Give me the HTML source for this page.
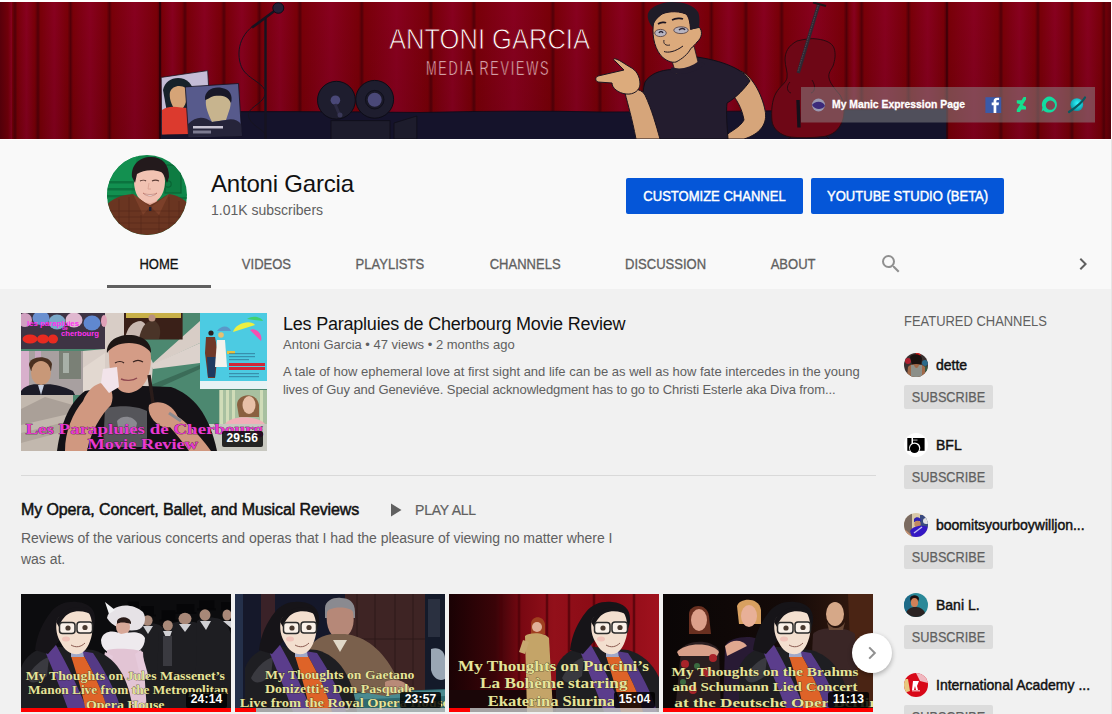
<!DOCTYPE html>
<html><head><meta charset="utf-8">
<style>
*{box-sizing:border-box;margin:0;padding:0}
html,body{width:1112px;height:714px;overflow:hidden;background:#f1f1f1;font-family:"Liberation Sans",sans-serif}
.a{position:absolute}
#hdr{position:absolute;left:0;top:0;width:1112px;height:289px;background:#f9f9f9}
#topw{position:absolute;left:0;top:0;width:1112px;height:2px;background:#fff}
#banner{position:absolute;left:0;top:2px;width:1111px;height:137px;overflow:hidden}
#bline{position:absolute;left:0;top:139px;width:1112px;height:1px;background:#fff}
.tab{position:absolute;top:256px;font-size:14px;color:#606060;-webkit-text-stroke:.3px #606060;text-align:center;white-space:nowrap;line-height:16px}
.sx{display:inline-block;transform:scaleX(.93)}
.btn{position:absolute;top:178px;height:36px;background:#0556d8;border-radius:2px;color:#fff;font-size:14px;-webkit-text-stroke:.45px #fff;line-height:36px;text-align:center;white-space:nowrap}
</style></head><body>
<div id="hdr"></div>
<div id="topw"></div>
<div id="banner">
<svg width="1111" height="137" viewBox="0 2 1111 137">
<defs>
<linearGradient id="cur" x1="0" y1="0" x2="1111" y2="0" gradientUnits="userSpaceOnUse"><stop offset="0.0000" stop-color="#5a000a"/><stop offset="0.0072" stop-color="#72000a"/><stop offset="0.0104" stop-color="#88011f"/><stop offset="0.0108" stop-color="#790008"/><stop offset="0.0135" stop-color="#520008"/><stop offset="0.0158" stop-color="#790008"/><stop offset="0.0239" stop-color="#88011f"/><stop offset="0.0315" stop-color="#790008"/><stop offset="0.0342" stop-color="#520008"/><stop offset="0.0365" stop-color="#790008"/><stop offset="0.0488" stop-color="#88011f"/><stop offset="0.0608" stop-color="#790008"/><stop offset="0.0635" stop-color="#520008"/><stop offset="0.0657" stop-color="#790008"/><stop offset="0.0810" stop-color="#88011f"/><stop offset="0.0959" stop-color="#790008"/><stop offset="0.0986" stop-color="#520008"/><stop offset="0.1008" stop-color="#790008"/><stop offset="0.1213" stop-color="#88011f"/><stop offset="0.1413" stop-color="#790008"/><stop offset="0.1440" stop-color="#520008"/><stop offset="0.1463" stop-color="#790008"/><stop offset="0.1553" stop-color="#88011f"/><stop offset="0.1638" stop-color="#790008"/><stop offset="0.1665" stop-color="#520008"/><stop offset="0.1688" stop-color="#790008"/><stop offset="0.1841" stop-color="#88011f"/><stop offset="0.1989" stop-color="#790008"/><stop offset="0.2016" stop-color="#520008"/><stop offset="0.2039" stop-color="#790008"/><stop offset="0.2176" stop-color="#88011f"/><stop offset="0.2308" stop-color="#790008"/><stop offset="0.2335" stop-color="#520008"/><stop offset="0.2357" stop-color="#790008"/><stop offset="0.2518" stop-color="#88011f"/><stop offset="0.2673" stop-color="#790008"/><stop offset="0.2700" stop-color="#520008"/><stop offset="0.2723" stop-color="#790008"/><stop offset="0.2978" stop-color="#88011f"/><stop offset="0.3230" stop-color="#790008"/><stop offset="0.3257" stop-color="#520008"/><stop offset="0.3279" stop-color="#790008"/><stop offset="0.3568" stop-color="#88011f"/><stop offset="0.3852" stop-color="#790008"/><stop offset="0.3879" stop-color="#520008"/><stop offset="0.3902" stop-color="#790008"/><stop offset="0.4073" stop-color="#88011f"/><stop offset="0.4239" stop-color="#790008"/><stop offset="0.4266" stop-color="#520008"/><stop offset="0.4289" stop-color="#790008"/><stop offset="0.4622" stop-color="#88011f"/><stop offset="0.4950" stop-color="#790008"/><stop offset="0.4977" stop-color="#520008"/><stop offset="0.5000" stop-color="#790008"/><stop offset="0.5189" stop-color="#88011f"/><stop offset="0.5374" stop-color="#790008"/><stop offset="0.5401" stop-color="#520008"/><stop offset="0.5423" stop-color="#790008"/><stop offset="0.5595" stop-color="#88011f"/><stop offset="0.5763" stop-color="#790008"/><stop offset="0.5790" stop-color="#520008"/><stop offset="0.5813" stop-color="#790008"/><stop offset="0.6097" stop-color="#88011f"/><stop offset="0.6377" stop-color="#790008"/><stop offset="0.6404" stop-color="#520008"/><stop offset="0.6427" stop-color="#790008"/><stop offset="0.6559" stop-color="#88011f"/><stop offset="0.6688" stop-color="#790008"/><stop offset="0.6715" stop-color="#520008"/><stop offset="0.6737" stop-color="#790008"/><stop offset="0.6876" stop-color="#88011f"/><stop offset="0.7010" stop-color="#790008"/><stop offset="0.7037" stop-color="#520008"/><stop offset="0.7059" stop-color="#790008"/><stop offset="0.7328" stop-color="#88011f"/><stop offset="0.7592" stop-color="#790008"/><stop offset="0.7619" stop-color="#520008"/><stop offset="0.7642" stop-color="#790008"/><stop offset="0.7688" stop-color="#88011f"/><stop offset="0.7729" stop-color="#790008"/><stop offset="0.7756" stop-color="#520008"/><stop offset="0.7779" stop-color="#790008"/><stop offset="0.7967" stop-color="#88011f"/><stop offset="0.8151" stop-color="#790008"/><stop offset="0.8178" stop-color="#520008"/><stop offset="0.8201" stop-color="#790008"/><stop offset="0.8350" stop-color="#88011f"/><stop offset="0.8494" stop-color="#790008"/><stop offset="0.8521" stop-color="#520008"/><stop offset="0.8544" stop-color="#790008"/><stop offset="0.8766" stop-color="#88011f"/><stop offset="0.8983" stop-color="#790008"/><stop offset="0.9010" stop-color="#520008"/><stop offset="0.9032" stop-color="#790008"/><stop offset="0.9176" stop-color="#88011f"/><stop offset="0.9316" stop-color="#790008"/><stop offset="0.9343" stop-color="#520008"/><stop offset="0.9365" stop-color="#790008"/><stop offset="0.9496" stop-color="#88011f"/><stop offset="0.9622" stop-color="#790008"/><stop offset="0.9649" stop-color="#520008"/><stop offset="0.9671" stop-color="#790008"/><stop offset="0.9793" stop-color="#88011f"/><stop offset="0.9910" stop-color="#790008"/><stop offset="0.9937" stop-color="#520008"/><stop offset="0.9959" stop-color="#790008"/><stop offset="0.9955" stop-color="#6e0008"/><stop offset="1.0000" stop-color="#58000a"/></linearGradient>
<linearGradient id="vsh" x1="0" y1="0" x2="0" y2="1"><stop offset="0" stop-color="#000" stop-opacity="0"/><stop offset="1" stop-color="#000" stop-opacity=".1"/></linearGradient>
</defs>
<rect x="0" y="0" width="1111" height="140" fill="url(#cur)"/>
<rect x="0" y="0" width="1111" height="140" fill="url(#vsh)"/>
<!-- floor -->
<path d="M160 112 Q300 111 420 112.5 Q520 110 600 112 Q700 111.5 760 111 Q870 109.5 947 109 L947 140 L160 140 Z" fill="#15132b" stroke="#0c0a18" stroke-width=".8"/>
<!-- curtain edges in front -->
<path d="M947 2 L947 140" stroke="#3a0008" stroke-width="1.2"/>
<path d="M160 2 L160 140" stroke="#2a0008" stroke-width="1.5"/>

<!-- title text -->
<text x="389" y="48.5" font-family="Liberation Sans" font-size="29.6" fill="#fff" stroke="#82000f" stroke-width=".9" textLength="201" lengthAdjust="spacingAndGlyphs">ANTONI GARCIA</text>
<text x="687" y="75.5" font-family="Liberation Sans" font-size="20.6" fill="#f0d4da" stroke="#82000f" stroke-width=".7" textLength="197.6" lengthAdjust="spacing" transform="scale(.62 1)">MEDIA REVIEWS</text>

<!-- mic stand -->
<path d="M253 26 C235 40 238 60 242 68 C248 80 268 84 265 95 C262 105 245 108 249 118 C253 128 268 130 266 139" stroke="#161320" stroke-width="1" fill="none"/>
<path d="M265.5 17 L265.5 139" stroke="#161320" stroke-width="2.4"/>
<path d="M252 27.5 L275 10.5" stroke="#161320" stroke-width="2.6"/>
<ellipse cx="278.3" cy="8" rx="5.5" ry="5.3" fill="#232138" stroke="#0e0c18" stroke-width="1"/>

<!-- CDs -->
<polygon points="161.2,77.4 207.7,70.6 211,130 161.8,134.5" fill="#c4bcd6" stroke="#1a1420" stroke-width=".8"/>
<path d="M163 90 C165 80 175 76 184 79 C192 82 196 92 193 102 L188 112 L168 118 Z" fill="#17222a"/>
<path d="M170 92 C172 86 180 84 186 88 C189 96 186 104 183 108 L175 110 C171 104 169 98 170 92Z" fill="#d6a477"/>
<path d="M162 110 C170 104 180 108 188 108 L190 134 L162 134.5Z" fill="#dc3a2e"/>
<polygon points="185.3,86.9 238.5,83.5 241.8,136.1 188.6,137.3" fill="#575a8c" stroke="#14121f" stroke-width=".8"/>
<path d="M206 100 C206 92 214 88 222 90 C230 92 232 100 230 108 L226 120 L212 122 C208 114 205 106 206 100Z" fill="#c7b48e"/>
<path d="M205 100 C204 90 214 86 222 88 C230 89 233 96 231 103 C228 96 222 95 214 96 C210 97 207 100 205 100Z" fill="#181828"/>
<path d="M188 124 C196 116 204 116 212 122 L226 120 C232 118 238 120 241 124 L241.6 136 L188.5 137Z" fill="#26243a"/>
<rect x="193" y="126" width="30" height="2.5" fill="#e6e0ee" opacity=".85"/>
<rect x="193" y="130.5" width="18" height="3" fill="#b8b6cc" opacity=".6"/>

<!-- projector -->
<circle cx="336.4" cy="100.2" r="18.9" fill="#1e1d2e" stroke="#0d0c16" stroke-width="1"/>
<circle cx="374.7" cy="99.3" r="18.9" fill="#1e1d2e" stroke="#0d0c16" stroke-width="1"/>
<circle cx="335.4" cy="100.2" r="4.8" fill="#4a4878"/>
<path d="M335 104 L340 116" stroke="#2c2a42" stroke-width="3"/>
<circle cx="340" cy="115" r="2.5" fill="#3a3858"/>
<circle cx="374.7" cy="99.7" r="9.3" fill="#1a1928" stroke="#0d0c16" stroke-width=".8"/>
<circle cx="374.7" cy="99.7" r="7" fill="#4a4878"/>
<rect x="331" y="120.7" width="59" height="19" fill="#1d1c2c" stroke="#0f0e18" stroke-width=".8"/>
<polygon points="394,123 416.8,116 416.8,139 394,139" fill="#1d1c2c" stroke="#0f0e18" stroke-width=".8"/>

<!-- cello -->
<path d="M797 41 C805 39 812 38 817 39 C826 40 832 43 834 48 C836 54 835 60 833 66 C831 70 828 73 829 78 C830 83 834 88 840 95 C845 103 845 115 842 122 C838 131 832 135 824 136.5 C812 138 800 138 790 137 C780 135 773 129 772 121 C771 111 772 100 776 93 C780 86 786 83 787 78 C788 72 785 66 785 60 C785 52 788 46 797 41Z" fill="#6e0716" stroke="#2a0a10" stroke-width="1"/>
<path d="M818.8 4 L798.2 73" stroke="#2e2832" stroke-width="3.4"/>
<path d="M818.3 5 L797.7 72" stroke="#6a5a66" stroke-width=".6" stroke-dasharray="1.5 1"/>
<path d="M813 2.5 L826 6" stroke="#1e1418" stroke-width="2.2"/>
<path d="M798 100 L799 127.5" stroke="#14101a" stroke-width="3.4"/>
<path d="M790 82 C786 86 787 92 791 93 M812 80 C816 86 815 92 811 93" stroke="#1e0a10" stroke-width=".8" fill="none"/>
<path d="M791 137 L787 140 M826 136 L830 140" stroke="#1e0a10" stroke-width="1"/>
<!-- character -->
<!-- right arm -->
<path d="M738 70 C752 74 762 95 765 110 C768 124 760 134 744 139 L722 139 C728 132 740 128 744 120 C742 108 736 98 730 92Z" fill="#d6a57a" stroke="#1b1420" stroke-width="1"/>
<!-- shirt -->
<path d="M672 69.5 C660 70 650 74 645 82 C641 95 642 118 643 139 L728 139 C727 125 726 112 727 103 C736 98 745 88 750 81 C745 72 730 62 697 57 Z" fill="#231c2e" stroke="#120e18" stroke-width="1"/>
<!-- neck -->
<path d="M671 58 L676 74 L699 66 L694 46Z" fill="#d6a57a" stroke="#1b1420" stroke-width=".8"/>
<path d="M671.5 67.3 C680 70 690 68 699 61 L705 64 C694 74 680 76 670 72Z" fill="#231c2e"/>
<!-- head -->
<path d="M653.7 22 C652 32 653 46 661 55.7 C666 61 672 63 676 62 C682 59 688 54 690.5 49 C693 46 696 44 697 42 C702 38 703 31 699 27 L690.5 29.4 C690 22 689 17 686 14 C676 10 665 12 661 14.7 C657 18 655 20 653.7 22Z" fill="#dcaa7c" stroke="#1b1420" stroke-width="1"/>
<path d="M647.9 13.7 C650 7 660 2.5 671.5 2 C684 2 694 5 698.3 12.6 C700 18 699.5 24 698.9 28 L690.5 29.4 C690 22 689 17 686 14 C676 10 665 12 661 14.7 C657 18 655 21 653.7 24.2 L652.6 27.3 C649 23 647 18 647.9 13.7Z" fill="#1f1c28"/>
<path d="M658 24 C661 22 665 22 666 23 M672 20 C676 18 681 18 683 19" stroke="#1b1420" stroke-width="1.6" fill="none"/>
<ellipse cx="660.5" cy="33" rx="5.8" ry="3.6" fill="#b8b4c0" stroke="#4a3a40" stroke-width=".8"/>
<ellipse cx="681" cy="30.2" rx="7.2" ry="3.4" fill="#b8b4c0" stroke="#4a3a40" stroke-width=".8"/>
<path d="M659 33 C660 31 662 31 663 33 M679 30 C681 28 684 28 685 30" stroke="#2a2436" stroke-width="1.5" fill="none"/>
<path d="M664 40 C663 44 666 46 670 45" stroke="#1b1420" stroke-width=".9" fill="none"/>
<path d="M664 51.5 C668 53 675 52 683 46" stroke="#1b1420" stroke-width="1" fill="none"/>
<!-- left arm -->
<path d="M625 93 C628 105 632 118 636 139 L660 139 C656 125 652 110 645 95 C642 90 636 88 630 90Z" fill="#d6a57a" stroke="#1b1420" stroke-width="1"/>
<path d="M615 61 C618 64 621 67 624 70 L598 76 C595 77 595 81 598 82 L612 83 C612 88 618 93 626 94 C634 95 640 90 640 84 C640 76 636 70 630 67 C626 65 620 60 616 59 C613 58 613 60 615 61Z" fill="#dcab7c" stroke="#1b1420" stroke-width="1"/>

<!-- overlay box -->
<rect x="801" y="87" width="294" height="35.5" fill="#8c8c8c" fill-opacity=".5"/>
<circle cx="818.5" cy="105" r="6.5" fill="#9a98b0"/>
<path d="M812 105 C814 101 823 100 825 106 C822 110 815 110 812 105Z" fill="#3c2a7a"/>
<text x="832" y="108.3" font-family="Liberation Sans" font-size="11.8" font-weight="bold" fill="#fff" stroke="#fff" stroke-width=".3" textLength="133" lengthAdjust="spacingAndGlyphs">My Manic Expression Page</text>
<rect x="985.4" y="97.2" width="15.8" height="15.8" fill="#3b5aa8"/>
<path d="M996.3 113 L996.3 105.2 L998.6 105.2 L999 102.6 L996.3 102.6 L996.3 101.2 C996.3 100.4 996.7 100 997.6 100 L999.1 100 L999.1 97.7 L997.1 97.7 C994.8 97.7 993.6 99 993.6 101 L993.6 102.6 L991.7 102.6 L991.7 105.2 L993.6 105.2 L993.6 113Z" fill="#fff"/>
<path d="M1016.8 100.3 L1021.6 100.3 L1023.6 97 L1026 97 L1026 99.5 L1022.6 105 L1026 106.8 L1026 109.4 L1021.4 109.4 L1019.8 112 L1016.8 112 L1016.8 109.6 L1020.2 104.2 L1016.8 103.2Z" fill="#14e08e"/>
<path fill-rule="evenodd" d="M1049.2 96.6 A8 8 0 1 1 1043.2 110.2 L1041.6 112 L1042.4 107.4 A8 8 0 0 1 1049.2 96.6Z M1050.4 100.6 A4.6 4.6 0 1 0 1050.41 100.6Z" fill="#12dca0"/>
<defs><radialGradient id="pl" cx=".55" cy=".4" r=".6"><stop offset="0" stop-color="#30f8ff"/><stop offset="1" stop-color="#0a9aa8"/></radialGradient></defs>
<circle cx="1076.8" cy="104.6" r="6.4" fill="url(#pl)"/>
<path d="M1069 112 C1072 110 1082 103 1085 97.5" stroke="#0a5a60" stroke-width="2.2" fill="none" stroke-linecap="round"/>
</svg>

</div>
<div id="bline"></div>

<!-- avatar -->
<div class="a" style="left:107px;top:155px;width:80px;height:80px;border-radius:50%;overflow:hidden"><svg width="80" height="80" viewBox="0 0 80 80">
<rect width="80" height="80" fill="#10864a"/>
<path d="M0 0 L30 0 L24 40 L0 44Z" fill="#139050"/>
<g fill="#0b6c3a" opacity=".8"><rect x="0" y="26" width="28" height="2.5"/><rect x="0" y="33" width="28" height="2.5"/><rect x="0" y="40" width="28" height="2.5"/><rect x="62" y="42" width="18" height="2"/></g>
<rect x="58" y="10" width="16" height="28" fill="#0e7c42" stroke="#0a6434" stroke-width="1.2"/>
<circle cx="61" cy="29" r="3.2" fill="none" stroke="#0a6434" stroke-width="1.2"/>
<path d="M36 44 L50 44 L52 52 L34 52Z" fill="#e2a898"/>
<path d="M27 26 C26 16 33 10 42 10 C52 10 58 16 58 26 C58 38 52 48 42 48 C32 48 27 38 27 26Z" fill="#f1c2b2"/>
<path d="M25 22 C24 10 32 2 44 2 C56 2 62 10 62 22 L60 28 C58 22 56 18 54 17 C46 14 36 15 30 19 L28 28 Z" fill="#231a1c"/>
<path d="M33 26 C35 25 38 25 39 26 M45 26 C47 25 50 25 52 26" stroke="#5a3a34" stroke-width="1.1" fill="none"/>
<path d="M42 28 L41 34 L44 34" stroke="#d8a090" stroke-width=".8" fill="none"/>
<path d="M36 38 C40 42 46 42 50 38 C48 40 38 40 36 38Z" fill="#fff" stroke="#b06a60" stroke-width=".6"/>
<path d="M0 50 C4 44 14 40 26 39 C30 42 36 47 43 50 C50 47 56 42 62 39 C70 40 77 44 80 48 L80 80 L0 80Z" fill="#6b3522"/>
<path d="M26 39 L36 60 L43 52 L33 44Z" fill="#7c412a"/><path d="M62 39 L52 60 L44 52 L55 44Z" fill="#7c412a"/>
<rect x="42" y="52" width="2.4" height="4" fill="#1e2236"/>
<g stroke="#3a1a10" stroke-width=".55" opacity=".55"><path d="M0 56 H80"/><path d="M0 62 H80"/><path d="M0 68 H80"/><path d="M0 74 H80"/><path d="M12 44 V80"/><path d="M22 42 V80"/><path d="M62 42 V80"/><path d="M72 46 V80"/><path d="M34 60 V80"/><path d="M52 60 V80"/></g>
</svg></div>
<div class="a" style="left:211px;top:170px;font-size:24px;letter-spacing:-.2px;color:#111;white-space:nowrap;line-height:28px">Antoni Garcia</div>
<div class="a" style="left:211px;top:202px;font-size:14px;color:#606060;white-space:nowrap;line-height:16px">1.01K subscribers</div>
<div class="btn" style="left:626px;width:177px"><span class="sx">CUSTOMIZE CHANNEL</span></div>
<div class="btn" style="left:811px;width:193px"><span class="sx">YOUTUBE STUDIO (BETA)</span></div>

<div class="tab" style="left:107px;width:104px;color:#111;-webkit-text-stroke-color:#111"><span class="sx">HOME</span></div>
<div class="tab" style="left:211px;width:111.5px"><span class="sx">VIDEOS</span></div>
<div class="tab" style="left:322.5px;width:133.7px"><span class="sx">PLAYLISTS</span></div>
<div class="tab" style="left:457px;width:136px"><span class="sx">CHANNELS</span></div>
<div class="tab" style="left:593.8px;width:144.3px"><span class="sx">DISCUSSION</span></div>
<div class="tab" style="left:738.2px;width:109px"><span class="sx">ABOUT</span></div>
<div class="a" style="left:107px;top:285px;width:104px;height:3px;background:#606060"></div>


<!-- search & chevron -->
<svg class="a" style="left:879px;top:252px" width="24" height="24" viewBox="0 0 24 24"><path d="M15.5 14h-.79l-.28-.27A6.47 6.47 0 0 0 16 9.5 6.5 6.5 0 1 0 9.5 16c1.61 0 3.09-.59 4.23-1.57l.27.28v.79l5 4.99L20.49 19l-4.99-5zm-6 0C7.01 14 5 11.99 5 9.5S7.01 5 9.5 5 14 7.01 14 9.5 11.99 14 9.5 14z" fill="#909090"/></svg>
<svg class="a" style="left:1071px;top:252px" width="24" height="24" viewBox="0 0 24 24"><path d="M8.59 16.59L13.17 12 8.59 7.41 10 6l6 6-6 6-1.41-1.41z" fill="#606060"/></svg>

<!-- featured video -->
<div class="a" style="left:283px;top:313px;font-size:18px;letter-spacing:-.22px;color:#111;white-space:nowrap;line-height:22px">Les Parapluies de Cherbourg Movie Review</div>
<div class="a" style="left:283px;top:337px;font-size:13px;color:#606060;white-space:nowrap;line-height:16px">Antoni Garcia &bull; 47 views &bull; 2 months ago</div>
<div class="a" style="left:283px;top:363px;width:600px;font-size:13px;color:#606060;line-height:18px;white-space:nowrap">A tale of how ephemeral love at first sight and life can be as well as how fate intercedes in the young<br><span style="letter-spacing:-.085px">lives of Guy and Geneviéve. Special acknowledgment has to go to Christi Esterle aka Diva from...</span></div>

<div class="a" style="left:21px;top:475px;width:855px;height:1px;background:#d9d9d9"></div>

<div class="a" style="left:21px;top:500px;font-size:16px;color:#111;-webkit-text-stroke:.5px #111;letter-spacing:-.11px;white-space:nowrap;line-height:19px">My Opera, Concert, Ballet, and Musical Reviews</div>
<svg class="a" style="left:384px;top:498px" width="24" height="24" viewBox="0 0 24 24"><path d="M7 5.5v13l10.5-6.5z" fill="#606060"/></svg>
<div class="a" style="left:415px;top:502px;font-size:14px;color:#606060;-webkit-text-stroke:.2px #606060;letter-spacing:-.2px;white-space:nowrap;line-height:16px">PLAY ALL</div>
<div class="a" style="left:21px;top:528px;font-size:14px;color:#606060;line-height:21px;letter-spacing:-.025px;white-space:nowrap">Reviews of the various concerts and operas that I had the pleasure of viewing no matter where I<br>was at.</div>

<!--THUMBS--><svg width="0" height="0" style="position:absolute"><defs>
<g id="rev">
<path d="M0 74 C4 62 16 54 28 52 L72 56 C94 62 108 82 112 118 L0 118Z" fill="#1e1e22"/>
<path d="M6 84 C12 72 20 66 28 63 L26 82 C18 88 10 92 6 84Z" fill="#3a3a40"/>
<path d="M22 52 L35 51 C46 70 58 95 67 118 L48 118 C40 95 30 72 22 52Z" fill="#5b3d8c"/>
<path d="M60 57 L72 59 C86 80 96 100 101 118 L87 118 C81 95 71 75 60 57Z" fill="#553a86"/>
<path d="M50 62 L63 62 C73 80 83 100 87 118 L65 118 C61 96 55 78 50 62Z" fill="#de6328"/>
<path d="M50 58 L62 58 L63 63 L50 63Z" fill="#a0a8c8"/>
<path d="M14 56 C16 40 22 28 30 18 C36 10 46 7 56 8 C68 9 74 15 74 25 C74 31 72 35 71 37 L42 42 C38 48 32 54 27 60Z" fill="#161418"/>
<path d="M36 26 C40 18 52 14 66 16 C71 22 72 32 71 40 C69 50 65 58 58 60 C50 61 44 57 40 49 C36 43 34 34 36 26Z" fill="#f3dfcf"/>
<path d="M35 28 C38 18 50 12 62 13 C68 14 72 18 73 22 C66 17 56 16 49 19 C43 22 40 27 38 33Z" fill="#161418"/>
<ellipse cx="45" cy="45" rx="4" ry="2.5" fill="#f0b8b0" opacity=".7"/>
<rect x="38.5" y="28.5" width="15.5" height="11" rx="3" fill="#fff" fill-opacity=".55" stroke="#2a2a2a" stroke-width="1.5"/>
<rect x="56" y="28" width="15.5" height="11" rx="3" fill="#fff" fill-opacity=".55" stroke="#2a2a2a" stroke-width="1.5"/>
<circle cx="47" cy="34" r="2.6" fill="#4a3a30"/><circle cx="64" cy="33.5" r="2.6" fill="#4a3a30"/>
<path d="M50 51 C55 54 60 53 64 49" stroke="#8a5a50" stroke-width="1" fill="none"/>
</g>
</defs></svg>
<div class="a" style="left:21px;top:313px;width:246px;height:138px;overflow:hidden"><svg width="246" height="138" viewBox="0 0 246 138">
<rect width="246" height="138" fill="#4c8870"/>
<path d="M84 0 L120 0 L120 26 L132 50 L179 8 L179 30 L132 52 L130 76 L90 80 L62 82 L62 38 L84 36Z" fill="#d8cdc6"/>
<path d="M130 52 L179 30 L179 50 L132 56Z" fill="#dcd2cc"/>
<path d="M62 55 L84 40 L84 82 L62 82Z" fill="#e2d8d0"/>
<path d="M120 76 L179 52 L179 56 L126 80Z" fill="#2a5040" opacity=".5"/>
<rect x="0" y="0" width="84" height="36" fill="#3e3444"/>
<g><ellipse cx="4" cy="7" rx="7" ry="7" fill="#d0a0c0"/><ellipse cx="20" cy="5" rx="8.5" ry="7" fill="#6a90d0"/><ellipse cx="36" cy="9" rx="8.5" ry="7.5" fill="#7aa8c8"/><ellipse cx="53" cy="7" rx="8.5" ry="7.5" fill="#e0b8d0"/><ellipse cx="71" cy="10" rx="8.5" ry="7.5" fill="#6088d0"/><ellipse cx="83" cy="8" rx="3" ry="6" fill="#e0a0b8"/></g>
<text x="6" y="13" font-family="Liberation Sans" font-weight="bold" font-size="6.5" fill="#ff30f0" textLength="52" lengthAdjust="spacingAndGlyphs">les parapluies</text>
<text x="41" y="17" font-family="Liberation Sans" font-weight="bold" font-size="5" fill="#ff30f0">de</text>
<text x="40" y="23" font-family="Liberation Sans" font-weight="bold" font-size="7" fill="#ff30f0" textLength="38" lengthAdjust="spacingAndGlyphs">cherbourg</text>
<g fill="#e82a20"><ellipse cx="9" cy="26" rx="7.5" ry="4.5"/><ellipse cx="22" cy="26" rx="6" ry="4.5"/><ellipse cx="32" cy="26" rx="5" ry="4.5"/></g>
<rect x="103" y="0" width="58.6" height="26.5" fill="#3a2018"/>
<rect x="105" y="0" width="55" height="5" fill="#c8b048"/>
<path d="M104 26 C106 14 112 8 120 8 C126 10 128 18 124 26Z" fill="#c8b8b0"/>
<path d="M118 26 C120 14 126 6 134 8 C140 12 140 20 138 26Z" fill="#4a3428"/>
<circle cx="131" cy="5" r="3.5" fill="#b89080"/>
<rect x="0" y="38" width="62" height="44" fill="#a8a0a0"/>
<rect x="0" y="38" width="8" height="44" fill="#d8b0cc"/>
<rect x="14" y="38" width="6" height="20" fill="#c8a8c0"/>
<rect x="38" y="38" width="22" height="28" fill="#7a8076"/>
<rect x="42" y="40" width="6" height="20" fill="#a8b0a8"/>
<path d="M8 52 C8 43 28 41 31 51 L30 58 L10 58Z" fill="#4a3020"/>
<ellipse cx="20" cy="60" rx="10" ry="12" fill="#c89878"/>
<path d="M0 78 C4 72 14 70 20 72 C28 70 40 72 52 78 L54 82 L0 82Z" fill="#1c1c28"/>
<path d="M17 72 L23 72 L20 82Z" fill="#c8d0e0"/>
<rect x="0" y="82" width="52" height="56" fill="#c2b8ae"/>
<path d="M0 96 L24 84 L52 92 L52 100 L0 112Z" fill="#aaa098"/>
<path d="M0 120 L40 110 L52 116 L0 130Z" fill="#b0a69c"/>
<rect x="179" y="0" width="67" height="76" fill="#4ccbe2"/>
<path d="M212 19 C214 10 230 6 234 12Z" fill="#eef040"/>
<path d="M229 17 C236 14 242 22 240 28Z" fill="#f850b0"/>
<path d="M226 6 C232 2 240 4 242 8Z" fill="#40d070"/>
<path d="M196 18 C200 12 208 12 210 18Z" fill="#5a98c8"/>
<circle cx="190" cy="20" r="2.6" fill="#2a2020"/>
<path d="M185 24 L194 24 L197 40 L194 65 L187 65 L184 40Z" fill="#703828"/>
<path d="M186 44 L195 44 L194 64 L187 64Z" fill="#1e3a60"/>
<circle cx="200" cy="22" r="2.8" fill="#e8c070"/>
<path d="M196 27 L204 27 L206 54 L194 54Z" fill="#f4f2ec"/>
<rect x="206" y="38" width="8" height="3" fill="#e8c040"/>
<g fill="#d02838"><rect x="208" y="50" width="36" height="3"/><rect x="208" y="54" width="36" height="3"/></g>
<g fill="#2a6a8a" opacity=".6"><rect x="208" y="40" width="26" height="1.2"/><rect x="208" y="43" width="26" height="1.2"/><rect x="208" y="46" width="20" height="1.2"/><rect x="208" y="60" width="30" height="1.2"/><rect x="208" y="63" width="30" height="1.2"/></g>
<rect x="179" y="68" width="67" height="8" fill="#e8f2f4"/>
<rect x="188" y="76" width="58" height="62" fill="#4c8870"/>
<rect x="198" y="77" width="48" height="34" fill="#a8c0a0"/>
<g fill="#d0dcb8"><rect x="199" y="77" width="3" height="34"/><rect x="205" y="77" width="3" height="34"/><rect x="211" y="77" width="3" height="34"/><rect x="239" y="77" width="3" height="34"/></g>
<path d="M216 92 C216 80 236 78 238 92 L238 104 L218 104Z" fill="#8a6040"/>
<ellipse cx="228" cy="92" rx="6.5" ry="9" fill="#e8c0a8"/>
<path d="M204 111 C210 102 236 102 244 111Z" fill="#f0b0b8"/>
<rect x="188" y="111" width="58" height="27" fill="#c8c8c0"/>
<path d="M36 138 C40 108 50 88 64 78 L96 72 L150 74 C172 82 188 100 196 138Z" fill="#141216"/>
<path d="M84 96 C92 92 116 92 126 98 L126 134 L82 134Z" fill="#55555a"/>
<path d="M96 108 C100 102 112 102 116 110 L114 120 L98 120Z" fill="#8a8a90"/>
<path d="M88 42 C86 30 96 24 108 24 C122 24 130 32 130 44 C130 62 124 78 108 80 C94 80 88 64 88 42Z" fill="#d49c86"/>
<path d="M86 40 C85 30 94 22 108 22 C122 22 131 30 130 40 C126 34 118 30 108 30 C98 30 90 34 86 40Z" fill="#1e1614"/>
<path d="M94 50 C97 48 101 48 103 50 M112 49 C115 47 119 47 122 49" stroke="#3a2420" stroke-width="1.2" fill="none"/>
<path d="M100 66 C104 68 112 68 116 65" stroke="#904850" stroke-width="1.4" fill="none"/>
<path d="M44 138 C44 118 52 100 62 88 C66 78 74 70 82 70 C90 72 94 82 90 92 C80 102 70 118 66 138Z" fill="#d09880"/>
<path d="M82 56 L96 54 L98 74 L88 80 L80 70Z" fill="#f2e4ea"/>
<path d="M128 62 L134 104" stroke="#2a1c1a" stroke-width="3.4"/>
<path d="M128 92 C136 86 150 90 156 102 C160 110 152 116 142 114 C132 110 126 100 128 92Z" fill="#d09880"/>
<path d="M150 100 C160 104 176 118 190 138 L168 138 C160 126 150 116 146 110Z" fill="#d09880"/>
<path d="M148 100 L160 108" stroke="#8a8a90" stroke-width="3"/>
<text x="4.4" y="120.8" font-family="Liberation Serif" font-weight="bold" font-size="14.5" fill="#e83ad0" stroke="#2a0a28" stroke-width=".5" paint-order="stroke" textLength="237.6" lengthAdjust="spacingAndGlyphs">Les Parapluies de Cherbourg</text>
<text x="66.4" y="135.5" font-family="Liberation Serif" font-weight="bold" font-size="14.5" fill="#e83ad0" stroke="#2a0a28" stroke-width=".5" paint-order="stroke" textLength="110.6" lengthAdjust="spacingAndGlyphs">Movie Review</text>
</svg></div>
<div class="a" style="left:222px;top:431px;width:40.5px;height:15.6px;background:rgba(0,0,0,.82);border-radius:2px;color:#fff;font-size:12px;font-weight:bold;line-height:15.6px;text-align:center;letter-spacing:.2px">29:56</div>
<div class="a" style="left:21px;top:594px;width:210px;height:118px;overflow:hidden"><svg width="210" height="118" viewBox="0 0 210 118">
<rect width="210" height="118" fill="#0c0c0e"/>
<g fill="#1e1e22">
<path d="M104 26 C108 22 122 22 126 28 L128 118 L100 118Z"/>
<path d="M118 32 C124 28 138 28 142 34 L144 118 L114 118Z"/>
<path d="M138 38 C142 34 154 34 158 40 L160 118 L134 118Z"/>
<path d="M150 30 C158 26 178 26 184 34 L186 118 L148 118Z"/>
<path d="M176 27 C182 22 200 22 206 30 L210 40 L210 118 L174 118Z"/>
</g>
<g fill="#060608">
<rect x="106.5" y="7.5" width="11.5" height="9"/><rect x="120" y="12" width="13" height="9.5"/><rect x="140.5" y="16.4" width="14" height="10"/><rect x="155.7" y="10" width="17.6" height="9"/><rect x="178.4" y="6.3" width="15" height="9"/><rect x="200" y="8" width="10" height="8"/>
<rect x="104" y="15.5" width="16" height="2"/><rect x="118" y="20.5" width="17" height="2"/><rect x="138.5" y="25.5" width="18" height="2"/><rect x="153.5" y="18" width="22" height="2"/><rect x="176" y="14.3" width="19" height="2"/>
</g>
<g fill="#a88878"><ellipse cx="112.8" cy="21" rx="4" ry="4.6"/><ellipse cx="126.6" cy="26.5" rx="5" ry="5.2"/><ellipse cx="146.8" cy="31.5" rx="5" ry="5.2"/><ellipse cx="164" cy="24.6" rx="6.5" ry="5.8"/><ellipse cx="184" cy="21" rx="5.5" ry="5.8"/><ellipse cx="206" cy="21" rx="4.5" ry="5.5"/></g>
<g fill="#d0d0d4"><path d="M122 32 L132 32 L127 40Z"/><path d="M142 37 L151 37 L147 48Z"/><path d="M158 30 L170 30 L164 38Z"/><path d="M179 27 L190 27 L185 36Z"/><path d="M202 27 L210 27 L210 34Z"/></g>
<rect x="142" y="42" width="9" height="30" fill="#3a3a40"/>
<path d="M86 24 C88 12 108 6 122 18 C126 24 124 34 116 36 C106 38 92 34 86 24Z" fill="#e6e2e6"/>
<path d="M88 20 L84 8 L94 16Z" fill="#f2f2f4"/>
<ellipse cx="102" cy="33" rx="7" ry="8" fill="#d8a898"/>
<path d="M96 27 C98 22 108 22 110 28 L110 30 C104 28 98 28 96 30Z" fill="#2a1a18"/>
<path d="M80 46 C82 36 94 36 100 40 C108 38 120 36 124 44 C124 56 114 62 104 60 C92 62 80 58 80 46Z" fill="#eeeaee"/>
<path d="M86 56 C94 54 114 54 122 58 L126 118 L82 118Z" fill="#e2c4d4"/>
<path d="M84 58 L78 86 L86 88 L92 62Z" fill="#e6cadb"/><path d="M120 56 L128 84 L120 86 L114 60Z" fill="#e6cadb"/>
<use href="#rev" x="0" y="0"/>
<text x="4.7" y="85.5" font-family="Liberation Serif" font-weight="bold" font-size="13" fill="#e6e49a" stroke="#1e1a0a" stroke-width=".5" paint-order="stroke" textLength="199.3" lengthAdjust="spacingAndGlyphs">My Thoughts on Jules Massenet’s</text>
<text x="7" y="100" font-family="Liberation Serif" font-weight="bold" font-size="13" fill="#e6e49a" stroke="#1e1a0a" stroke-width=".5" paint-order="stroke" textLength="200" lengthAdjust="spacingAndGlyphs">Manon Live from the Metropolitan</text>
<text x="65" y="114.5" font-family="Liberation Serif" font-weight="bold" font-size="13" fill="#e6e49a" stroke="#1e1a0a" stroke-width=".5" paint-order="stroke" textLength="78.5" lengthAdjust="spacingAndGlyphs">Opera House</text>
</svg></div>
<div class="a" style="left:21px;top:708px;width:210px;height:4px;background:#f00"></div>
<div class="a" style="left:186.3px;top:692px;width:40.5px;height:15.5px;background:rgba(0,0,0,.82);border-radius:2px;color:#fff;font-size:12px;font-weight:bold;line-height:15.5px;text-align:center;letter-spacing:.2px">24:14</div>
<div class="a" style="left:235px;top:594px;width:210px;height:118px;overflow:hidden"><svg width="210" height="118" viewBox="0 0 210 118">
<rect width="210" height="118" fill="#15182a"/>
<rect x="0" y="0" width="8" height="118" fill="#24304a"/>
<rect x="26" y="0" width="14" height="70" fill="#3a2228"/>
<rect x="110" y="0" width="80" height="100" fill="#3e2424"/>
<g stroke="#2c1818" stroke-width="1"><path d="M122 0 V95"/><path d="M140 0 V95"/><path d="M160 0 V95"/><path d="M178 0 V95"/><path d="M110 45 H190"/></g>
<rect x="190" y="0" width="20" height="118" fill="#141a2a"/>
<rect x="193" y="5" width="12" height="38" fill="#2a3040"/>
<path d="M196 55 C204 52 210 58 210 64 L210 85 C204 88 198 84 196 76Z" fill="#9aa6b4"/>
<path d="M80 118 L90 100 L210 95 L210 118Z" fill="#2f6a70"/>
<path d="M110 100 L210 96 L210 102 L110 106Z" fill="#4a8a90"/>
<path d="M90 14 C90 6 100 3 106 4 C114 4 120 8 120 18 L120 24 L90 24Z" fill="#8a8a90"/>
<path d="M92 18 C94 12 116 12 118 18 C120 30 118 40 106 46 C96 44 90 34 92 18Z" fill="#b68878"/>
<path d="M72 60 C76 46 88 40 100 40 L110 40 C130 42 148 56 160 80 C166 90 170 95 175 98 L150 102 C138 100 120 96 100 96 L75 92Z" fill="#7a604c"/>
<path d="M98 46 L112 46 L105 58Z" fill="#e0d8c8"/>
<path d="M150 88 C158 84 172 86 176 96 L150 100Z" fill="#b88a78"/>
<use href="#rev" x="10" y="0"/>
<text x="30" y="85" font-family="Liberation Serif" font-weight="bold" font-size="13" fill="#e6e49a" stroke="#1e1a0a" stroke-width=".5" paint-order="stroke" textLength="149.4" lengthAdjust="spacingAndGlyphs">My Thoughts on Gaetano</text>
<text x="30" y="99" font-family="Liberation Serif" font-weight="bold" font-size="13" fill="#e6e49a" stroke="#1e1a0a" stroke-width=".5" paint-order="stroke" textLength="149.4" lengthAdjust="spacingAndGlyphs">Donizetti’s Don Pasquale</text>
<text x="4.7" y="113" font-family="Liberation Serif" font-weight="bold" font-size="13" fill="#e6e49a" stroke="#1e1a0a" stroke-width=".5" paint-order="stroke" textLength="209.3" lengthAdjust="spacingAndGlyphs">Live from the Royal Opera House</text>
</svg></div>
<div class="a" style="left:235px;top:708px;width:210px;height:4px;background:rgba(190,190,190,.85)"></div><div class="a" style="left:235px;top:708px;width:21px;height:4px;background:#f00"></div>
<div class="a" style="left:400.3px;top:692px;width:40.5px;height:15.5px;background:rgba(0,0,0,.82);border-radius:2px;color:#fff;font-size:12px;font-weight:bold;line-height:15.5px;text-align:center;letter-spacing:.2px">23:57</div>
<div class="a" style="left:449px;top:594px;width:210px;height:118px;overflow:hidden"><svg width="210" height="118" viewBox="0 0 210 118">
<defs><linearGradient id="t3c" x1="0" x2="1"><stop offset="0" stop-color="#1a0204"/><stop offset=".22" stop-color="#3a0408"/><stop offset=".35" stop-color="#7a0812"/><stop offset=".5" stop-color="#92101a"/><stop offset=".75" stop-color="#8a0a14"/><stop offset="1" stop-color="#a0121e"/></linearGradient></defs>
<rect width="210" height="118" fill="url(#t3c)"/>
<g stroke="#4a0208" stroke-width="2.5" opacity=".7"><path d="M52 0 V118"/><path d="M70 0 V118"/><path d="M98 0 V118"/><path d="M120 0 V118"/><path d="M145 0 V118"/><path d="M185 0 V118"/></g>
<rect x="0" y="96" width="110" height="22" fill="#1a0608"/>
<path d="M82 30 C82 22 94 20 96 30 L96 40 L82 40Z" fill="#a04020"/>
<circle cx="88" cy="33" r="5" fill="#e0b098"/>
<path d="M76 42 C80 38 96 38 100 44 L104 118 L78 118Z" fill="#c4a468"/>
<path d="M74 46 L70 58 L76 60 L80 48Z" fill="#c8a870"/>
<use href="#rev" x="107" y="0"/>
<text x="9" y="76.5" font-family="Liberation Serif" font-weight="bold" font-size="14" fill="#e6e49a" stroke="#1e1a0a" stroke-width=".5" paint-order="stroke" textLength="191" lengthAdjust="spacingAndGlyphs">My Thoughts on Puccini’s</text>
<text x="31" y="94.4" font-family="Liberation Serif" font-weight="bold" font-size="14" fill="#e6e49a" stroke="#1e1a0a" stroke-width=".5" paint-order="stroke" textLength="147.5" lengthAdjust="spacingAndGlyphs">La Bohème starring</text>
<text x="38.7" y="112.4" font-family="Liberation Serif" font-weight="bold" font-size="14" fill="#e6e49a" stroke="#1e1a0a" stroke-width=".5" paint-order="stroke" textLength="127.3" lengthAdjust="spacingAndGlyphs">Ekaterina Siurina</text>
</svg></div>
<div class="a" style="left:449px;top:708px;width:210px;height:4px;background:rgba(190,190,190,.85)"></div><div class="a" style="left:449px;top:708px;width:21px;height:4px;background:#f00"></div>
<div class="a" style="left:614.3px;top:692px;width:40.5px;height:15.5px;background:rgba(0,0,0,.82);border-radius:2px;color:#fff;font-size:12px;font-weight:bold;line-height:15.5px;text-align:center;letter-spacing:.2px">15:04</div>
<div class="a" style="left:663px;top:594px;width:210px;height:118px;overflow:hidden"><svg width="210" height="118" viewBox="0 0 210 118">
<defs><linearGradient id="t4c" x1="0" x2="1"><stop offset="0" stop-color="#0a0606"/><stop offset=".6" stop-color="#140a08"/><stop offset="1" stop-color="#3a1c10"/></linearGradient></defs>
<rect width="210" height="118" fill="url(#t4c)"/>
<path d="M185 0 L210 0 L210 118 L190 118Z" fill="#4a2414"/>
<path d="M26 20 C26 10 44 8 46 22 L48 40 L26 40Z" fill="#6a3020"/>
<ellipse cx="36" cy="26" rx="8" ry="11" fill="#dca08a"/>
<path d="M18 56 C22 46 48 44 56 56 L58 118 L12 118Z" fill="#2a1e20"/>
<path d="M14 58 C22 48 50 48 56 58 L54 62 L16 62Z" fill="#d8a08a"/>
<g fill="#a8242a"><circle cx="22" cy="70" r="4"/><circle cx="44" cy="78" r="5"/><circle cx="30" cy="96" r="4"/><circle cx="50" cy="64" r="4"/></g>
<g fill="#3a6a40"><circle cx="34" cy="72" r="3"/><circle cx="20" cy="88" r="3"/></g>
<path d="M74 12 C76 4 96 2 98 16 L98 30 L76 30Z" fill="#d8a060"/>
<ellipse cx="86" cy="22" rx="8" ry="11" fill="#e8b098"/>
<path d="M62 52 C66 42 94 40 98 48 L98 118 L60 118Z" fill="#281a34"/>
<path d="M62 52 C70 44 80 46 84 52 L64 62Z" fill="#e0a890"/>
<path d="M150 40 C156 32 184 32 192 40 L196 118 L146 118Z" fill="#3a2626"/>
<ellipse cx="172" cy="20" rx="9" ry="12" fill="#d6a888"/>
<path d="M164 28 C168 36 178 36 182 28 L180 36 L166 36Z" fill="#6a4a38"/>
<use href="#rev" x="76" y="0"/>
<text x="8.5" y="82" font-family="Liberation Serif" font-weight="bold" font-size="13" fill="#e6e49a" stroke="#1e1a0a" stroke-width=".5" paint-order="stroke" textLength="187.0" lengthAdjust="spacingAndGlyphs">My Thoughts on the Brahms</text>
<text x="9.4" y="97" font-family="Liberation Serif" font-weight="bold" font-size="13" fill="#e6e49a" stroke="#1e1a0a" stroke-width=".5" paint-order="stroke" textLength="185.1" lengthAdjust="spacingAndGlyphs">and Schumann Lied Concert</text>
<text x="11.3" y="113" font-family="Liberation Serif" font-weight="bold" font-size="13" fill="#e6e49a" stroke="#1e1a0a" stroke-width=".5" paint-order="stroke" textLength="204.7" lengthAdjust="spacingAndGlyphs">at the Deutsche Oper Berlin</text>
</svg></div>
<div class="a" style="left:663px;top:708px;width:210px;height:4px;background:#f00"></div>
<div class="a" style="left:828.3px;top:692px;width:40.5px;height:15.5px;background:rgba(0,0,0,.82);border-radius:2px;color:#fff;font-size:12px;font-weight:bold;line-height:15.5px;text-align:center;letter-spacing:.2px">11:13</div>
<!--/THUMBS-->

<div class="a" style="left:852px;top:633px;width:40px;height:40px;border-radius:50%;background:#fff;box-shadow:0 2px 5px rgba(0,0,0,.3)"></div>
<svg class="a" style="left:860px;top:641px" width="24" height="24" viewBox="0 0 24 24"><path d="M9.2 6.4 14.8 12 9.2 17.6" stroke="#909090" stroke-width="2" fill="none"/></svg>

<!-- sidebar -->
<div class="a" style="left:904px;top:313px;font-size:14px;color:#606060;white-space:nowrap;line-height:16px"><span class="sx" style="transform-origin:0 0;transform:scaleX(.925)">FEATURED CHANNELS</span></div>
<div class="a" style="left:904px;top:353px;width:24px;height:24px;border-radius:50%;overflow:hidden"><svg width="24" height="24" viewBox="0 0 24 24"><rect width="24" height="24" fill="#3a3030"/><circle cx="4" cy="8" r="3" fill="#b02030"/><circle cx="14" cy="2" r="2.5" fill="#e01818"/><circle cx="21" cy="10" r="3" fill="#2a6a8a"/><circle cx="21" cy="16" r="3" fill="#3a5a40"/>
<path d="M6 4 C8 0 18 0 18 6 L17 12 L8 12Z" fill="#1a1210"/><path d="M4 14 C6 10 18 10 21 14 L21 24 L3 24Z" fill="#a06848"/><path d="M7 12 L10 12 C11 16 14 16 15 12 L18 12 L18 24 L7 24Z" fill="#8c908a"/></svg></div>
<div class="a" style="left:936px;top:356px;font-size:14px;color:#111;-webkit-text-stroke:.45px #111;white-space:nowrap;line-height:18px">dette</div>
<div class="a" style="left:904px;top:385px;width:89px;height:24px;background:#dcdcdc;border-radius:2px;color:#606060;font-size:14px;-webkit-text-stroke:.25px #606060;line-height:24px;text-align:center"><span class="sx" style="transform:scaleX(.906)">SUBSCRIBE</span></div>
<div class="a" style="left:904px;top:433px;width:24px;height:24px;border-radius:50%;overflow:hidden"><svg width="24" height="24" viewBox="0 0 24 24"><rect width="24" height="24" fill="#ffffff"/><rect x="3.3" y="5" width="17.3" height="12.8" fill="#000"/><rect x="8.5" y="6.5" width="5" height="1.2" fill="#999"/><circle cx="10.7" cy="15" r="5.6" fill="#fff"/><circle cx="10.5" cy="15.4" r="4.6" fill="#000"/><rect x="7.5" y="4" width="1.5" height="7" fill="#fff"/></svg></div>
<div class="a" style="left:936px;top:436px;font-size:14px;color:#111;-webkit-text-stroke:.45px #111;white-space:nowrap;line-height:18px">BFL</div>
<div class="a" style="left:904px;top:465px;width:89px;height:24px;background:#dcdcdc;border-radius:2px;color:#606060;font-size:14px;-webkit-text-stroke:.25px #606060;line-height:24px;text-align:center"><span class="sx" style="transform:scaleX(.906)">SUBSCRIBE</span></div>
<div class="a" style="left:904px;top:513px;width:24px;height:24px;border-radius:50%;overflow:hidden"><svg width="24" height="24" viewBox="0 0 24 24"><rect width="24" height="24" fill="#d8c8a8"/><rect x="0" y="0" width="8" height="24" fill="#7a6a60"/><rect x="16" y="2" width="8" height="12" fill="#3a4a80"/><circle cx="22" cy="8" r="3" fill="#e0e0e0"/><path d="M10 6 C12 3 17 4 17 8 L10 9Z" fill="#3020b0"/><circle cx="13.5" cy="11" r="3.2" fill="#c08860"/><path d="M6 18 C8 14 16 11 24 14 L24 24 L8 24Z" fill="#3418c4"/><path d="M10 20 L18 14" stroke="#c0c0f0" stroke-width="1.4"/><path d="M0 16 C3 18 6 20 8 24 L0 24Z" fill="#c89070"/></svg></div>
<div class="a" style="left:936px;top:516px;font-size:14px;color:#111;-webkit-text-stroke:.45px #111;white-space:nowrap;line-height:18px">boomitsyourboywilljon...</div>
<div class="a" style="left:904px;top:545px;width:89px;height:24px;background:#dcdcdc;border-radius:2px;color:#606060;font-size:14px;-webkit-text-stroke:.25px #606060;line-height:24px;text-align:center"><span class="sx" style="transform:scaleX(.906)">SUBSCRIBE</span></div>
<div class="a" style="left:904px;top:593px;width:24px;height:24px;border-radius:50%;overflow:hidden"><svg width="24" height="24" viewBox="0 0 24 24"><rect width="24" height="24" fill="#2a8898"/><path d="M0 4 L8 2 L6 24 L0 24Z" fill="#1e6a88"/><path d="M6 6 C6 1 15 1 15 6 L14 9 L7 9Z" fill="#1a1010"/><ellipse cx="10.5" cy="9.5" rx="3.6" ry="4.5" fill="#d08058"/><path d="M2 20 C4 15 8 14 11 14 C15 14 19 15 21 20 L21 24 L2 24Z" fill="#2a2222"/></svg></div>
<div class="a" style="left:936px;top:596px;font-size:14px;color:#111;-webkit-text-stroke:.45px #111;white-space:nowrap;line-height:18px">Bani L.</div>
<div class="a" style="left:904px;top:625px;width:89px;height:24px;background:#dcdcdc;border-radius:2px;color:#606060;font-size:14px;-webkit-text-stroke:.25px #606060;line-height:24px;text-align:center"><span class="sx" style="transform:scaleX(.906)">SUBSCRIBE</span></div>
<div class="a" style="left:904px;top:673px;width:24px;height:24px;border-radius:50%;overflow:hidden"><svg width="24" height="24" viewBox="0 0 24 24"><rect width="24" height="24" fill="#d80818"/><path d="M12 0 L24 0 L24 10 L16 8Z" fill="#f0b8c0"/><path d="M0 6 L4 6 L6 18 L0 20Z" fill="#e8c880"/><path d="M9 8 L15 8 L13 13 L14 17 L12 17 L11 13 L10 17 L8 17Z" fill="#fff"/><rect x="8" y="17" width="8" height="1.5" fill="#fff" opacity=".6"/></svg></div>
<div class="a" style="left:936px;top:676px;font-size:14px;color:#111;-webkit-text-stroke:.45px #111;white-space:nowrap;line-height:18px">International Academy ...</div>
<div class="a" style="left:904px;top:705px;width:89px;height:24px;background:#dcdcdc;border-radius:2px;color:#606060;font-size:14px;-webkit-text-stroke:.25px #606060;line-height:24px;text-align:center"><span class="sx" style="transform:scaleX(.906)">SUBSCRIBE</span></div>
<div id="rcol" class="a" style="left:1111px;top:0;width:1px;height:139px;background:#fff"></div><div class="a" style="left:1111px;top:139px;width:1px;height:575px;background:#e6e6e6"></div>
</body></html>
